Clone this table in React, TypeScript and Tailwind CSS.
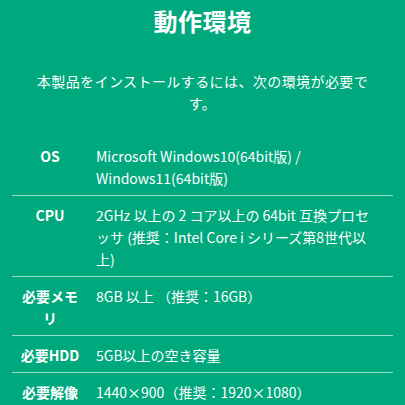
const specs: { label: string; value: string }[] = [
  { label: 'OS', value: 'Microsoft Windows10(64bit版) / Windows11(64bit版)' },
  {
    label: 'CPU',
    value: '2GHz 以上の 2 コア以上の 64bit 互換プロセッサ (推奨：Intel Core i シリーズ第8世代以上)',
  },
  { label: '必要メモリ', value: '8GB 以上 （推奨：16GB）' },
  { label: '必要HDD', value: '5GB以上の空き容量' },
  { label: '必要解像度', value: '1440×900（推奨：1920×1080）' },
];

export default function App() {
  return (
    <div className="min-h-screen w-full bg-[#00a87d] text-white font-['Noto_Sans_CJK_JP','Noto_Sans',sans-serif]">
      <section className="px-3 pt-[4px]">
        <h2 className="text-center text-[24px] font-bold leading-[34px] tracking-[0.02em]">動作環境</h2>

        <p className="mx-auto mt-[32px] w-[338px] text-center text-[14px] leading-[22px] tracking-[0.03em]">
          本製品をインストールするには、次の環境が必要です。
        </p>

        <table className="mt-[23px] w-full border-collapse">
          <tbody>
            {specs.map((s, i) => (
              <tr key={s.label} className={i > 0 ? 'border-t border-white/60' : ''}>
                <th className="w-[76px] px-[6px] pt-[8px] pb-[6px] text-center align-top text-[14px] font-bold leading-[22px]">
                  {s.label}
                </th>
                <td className="pl-[8px] pr-3 pt-[8px] pb-[6px] align-top text-[14px] leading-[22px]">
                  {s.value}
                </td>
              </tr>
            ))}
          </tbody>
        </table>
      </section>
    </div>
  );
}
